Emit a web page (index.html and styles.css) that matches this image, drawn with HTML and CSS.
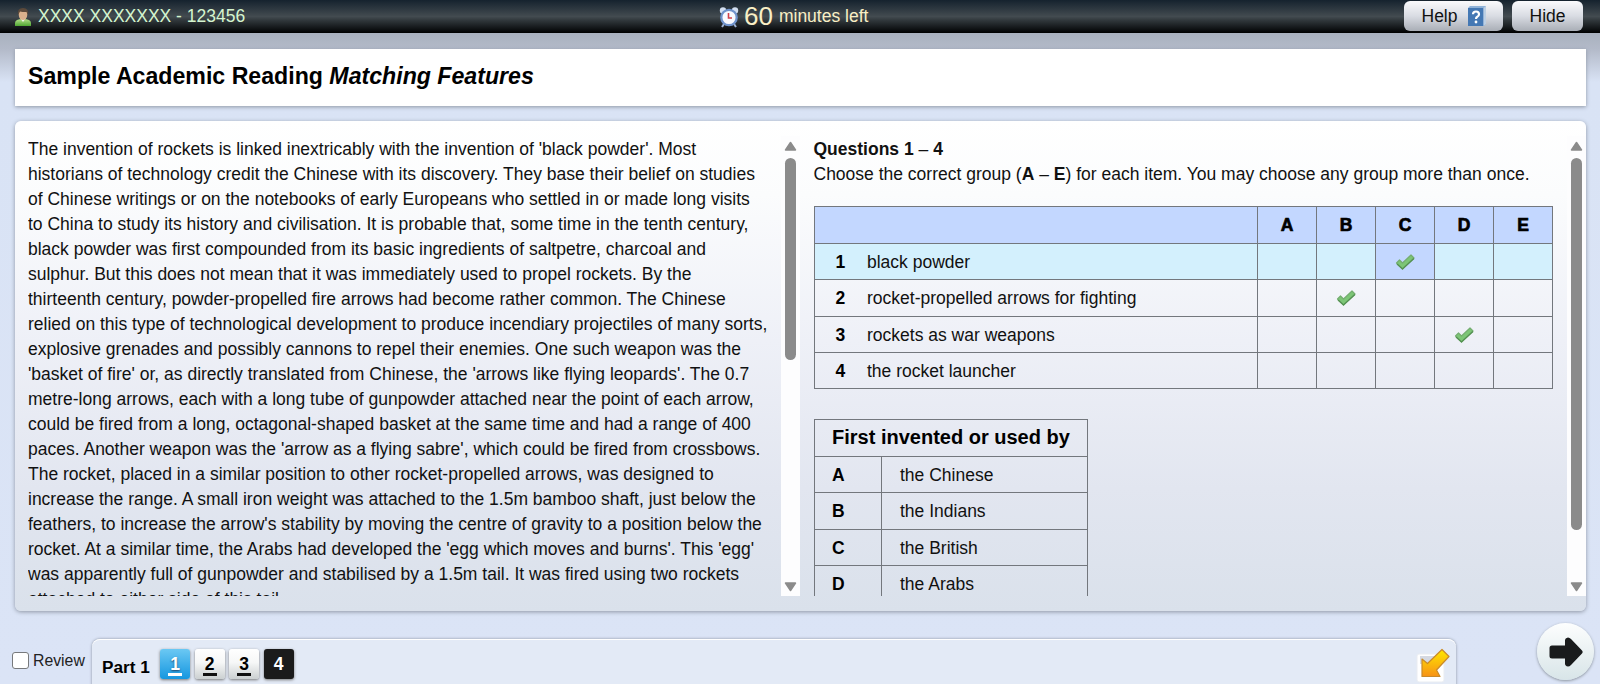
FILE: index.html
```html
<!DOCTYPE html>
<html lang="en">
<head>
<meta charset="utf-8">
<title>Sample Academic Reading</title>
<link rel="stylesheet" href="styles.css">
</head>
<body>
<header class="topbar">
  <div class="user">
    <svg width="18" height="20" viewBox="0 0 18 20"><defs><linearGradient id="gb" x1="0" y1="0" x2="0" y2="1"><stop offset="0" stop-color="#b4e08a"/><stop offset="1" stop-color="#4fa632"/></linearGradient></defs><path d="M1 19v-3q0-4 8-4t8 4v3z" fill="url(#gb)"/><path d="M6 11h6l-3 4z" fill="#f4f4ea"/><ellipse cx="9" cy="7.500" rx="4.300" ry="5.500" fill="#d9b08c"/><path d="M4 8Q3 1 9 1t5 7l-1.500-3Q8 5 6 4.500z" fill="#5c4a3b"/></svg>
    <span>XXXX XXXXXXX - 123456</span>
  </div>
  <div class="timer">
    <svg width="20" height="22" viewBox="0 0 20 22"><path d="M5 18l-2 3M15 18l2 3" stroke="#9fb4d6" stroke-width="2"/><circle cx="4" cy="4.500" r="3.200" fill="#d3dff1"/><circle cx="16" cy="4.500" r="3.200" fill="#d3dff1"/><circle cx="10" cy="11.500" r="7.700" fill="#f8faff" stroke="#6f93cc" stroke-width="2.300"/><path d="M9.500 7v5H13" stroke="#d0404a" stroke-width="1.600" fill="none"/></svg>
    <span class="minutes">60</span><span class="left">minutes left</span>
  </div>
  <div class="actions">
    <button class="pill help">Help
      <svg width="18" height="21" viewBox="0 0 18 21"><path d="M0 2l2-2h16v18l-2 2H0z" fill="#8fb2d8"/><path d="M0 2h15.500v18H0z" fill="#4478b4"/><path d="M15.500 2L18 0v18l-2.500 2z" fill="#bdd0e4"/><path d="M5 8.300Q5 5.500 8 5.500t3 2.800Q11 10 9.300 10.800 8 11.500 8 13" stroke="#fff" stroke-width="2.200" fill="none"/><circle cx="8" cy="16" r="1.400" fill="#fff"/></svg></button>
    <button class="pill hide">Hide</button>
  </div>
</header>
<section class="title"><h1>Sample Academic Reading <em>Matching Features</em></h1></section>
<main class="panel">
  <article class="passage">
    <p>The invention of rockets is linked inextricably with the invention of 'black powder'. Most<br>historians of technology credit the Chinese with its discovery. They base their belief on studies<br>of Chinese writings or on the notebooks of early Europeans who settled in or made long visits<br>to China to study its history and civilisation. It is probable that, some time in the tenth century,<br>black powder was first compounded from its basic ingredients of saltpetre, charcoal and<br>sulphur. But this does not mean that it was immediately used to propel rockets. By the<br>thirteenth century, powder-propelled fire arrows had become rather common. The Chinese<br>relied on this type of technological development to produce incendiary projectiles of many sorts,<br>explosive grenades and possibly cannons to repel their enemies. One such weapon was the<br>'basket of fire' or, as directly translated from Chinese, the 'arrows like flying leopards'. The 0.7<br>metre-long arrows, each with a long tube of gunpowder attached near the point of each arrow,<br>could be fired from a long, octagonal-shaped basket at the same time and had a range of 400<br>paces. Another weapon was the 'arrow as a flying sabre', which could be fired from crossbows.<br>The rocket, placed in a similar position to other rocket-propelled arrows, was designed to<br>increase the range. A small iron weight was attached to the 1.5m bamboo shaft, just below the<br>feathers, to increase the arrow's stability by moving the centre of gravity to a position below the<br>rocket. At a similar time, the Arabs had developed the 'egg which moves and burns'. This 'egg'<br>was apparently full of gunpowder and stabilised by a 1.5m tail. It was fired using two rockets<br>attached to either side of this tail.</p>
  </article>
  <div class="scroll">
    <svg width="13" height="10" viewBox="0 0 13 10"><path d="M6.500 1.500L11.500 9h-10z" class="tri"/></svg>
    <div class="track"><div class="thumb short"></div></div>
    <svg width="13" height="10" viewBox="0 0 13 10"><path d="M6.500 8.500L11.500 1h-10z" class="tri"/></svg>
  </div>
  <section class="questions">
    <p><b>Questions 1</b> – <b>4</b><br>Choose the correct group (<b>A</b> – <b>E</b>) for each item. You may choose any group more than once.</p>
    <div class="grid">
      <div class="row head"><span class="item"></span><b>A</b><b>B</b><b>C</b><b>D</b><b>E</b></div>
      <div class="row active"><span class="item"><b>1</b>black powder</span><i></i><i></i><i class="sel"><svg class="tick" viewBox="0 0 20 16"><use href="#tick"/></svg></i><i></i><i></i></div>
      <div class="row r2"><span class="item"><b>2</b>rocket-propelled arrows for fighting</span><i></i><i><svg class="tick" viewBox="0 0 20 16"><use href="#tick"/></svg></i><i></i><i></i><i></i></div>
      <div class="row"><span class="item"><b>3</b>rockets as war weapons</span><i></i><i></i><i></i><i><svg class="tick" viewBox="0 0 20 16"><use href="#tick"/></svg></i><i></i></div>
      <div class="row"><span class="item"><b>4</b>the rocket launcher</span><i></i><i></i><i></i><i></i><i></i></div>
    </div>
    <div class="key">
      <h2>First invented or used by</h2>
      <div class="krow"><b>A</b><span>the Chinese</span></div>
      <div class="krow k2"><b>B</b><span>the Indians</span></div>
      <div class="krow"><b>C</b><span>the British</span></div>
      <div class="krow"><b>D</b><span>the Arabs</span></div>
    </div>
  </section>
  <div class="scroll right">
    <svg width="13" height="10" viewBox="0 0 13 10"><path d="M6.500 1.500L11.500 9h-10z" class="tri"/></svg>
    <div class="track"><div class="thumb long"></div></div>
    <svg width="13" height="10" viewBox="0 0 13 10"><path d="M6.500 8.500L11.500 1h-10z" class="tri"/></svg>
  </div>
</main>
<footer class="footer">
  <label class="review"><span class="box"></span>Review</label>
  <nav class="nav">
    <b class="part">Part 1</b>
    <a class="q current"><u>1</u></a><a class="q"><u>2</u></a><a class="q"><u>3</u></a><a class="q done">4</a>
    <svg class="note" width="34" height="36" viewBox="0 0 34 36"><defs><linearGradient id="ga" x1="0" y1="0" x2="0" y2="1"><stop offset="0" stop-color="#ffe800"/><stop offset="1" stop-color="#f79216"/></linearGradient></defs><rect x="1" y="6" width="27" height="28" rx="2" fill="#fff" stroke="#e9ecf1"/><rect x="4" y="8" width="20" height="8" fill="#d5d9e2"/><path d="M26 1.500L33 8.500 20.500 22l3.500 6.500H6V11l5.500 4.500z" fill="url(#ga)" stroke="#c98a2a" stroke-width="1.200" stroke-linejoin="round"/></svg>
  </nav>
  <div class="next"><svg width="34" height="30" viewBox="0 0 34 30"><path d="M3 8.500h13V3.500Q16 1 19 .5q1.500 0 3 1.500l11 11.500q1.300 1.500 0 3L22 28q-1.500 1.500-3 1.500-3-.5-3-3v-5H3q-2.500 0-2.500-2.500v-8Q.5 8.500 3 8.500z" fill="#191b1c"/></svg></div>
</footer>
<svg class="defs"><defs><g id="tick"><path d="M1.500 9l3-3 3 3L16 1l3 3L7.500 15z" fill="#7cc676" stroke="#74ad70" stroke-width="1.200" stroke-linejoin="round"/><path d="M2 10l5.500 5L19 4.500" fill="none" stroke="#549152" stroke-width="1.200"/></g></defs></svg>
</body>
</html>
```
FILE: styles.css
```css
* { box-sizing: border-box; }
body { margin: 0; height: 684px; overflow: hidden; display: flex; flex-direction: column; font: 17.5px/25px "Liberation Sans", Arial, sans-serif; color: #111; background: linear-gradient(#a9b1be 33px, #b3bac9 49px, #d9e3f5 82px, #dbe4f6); }
p, h1, h2 { margin: 0; }
.topbar { height: 33px; flex: none; display: grid; grid-template-columns: 719px 1fr auto; background: linear-gradient(#15222e, #434b50 50%, #30373b 62%, #060809 95%, #000); padding-right: 17px; }
.user { display: flex; align-items: center; padding-left: 14px; gap: 6px; color: #d5f5cf; }
.timer { display: flex; align-items: center; color: #f9efc5; }
.minutes { font-size: 26px; margin: -2px 0 0 5px; line-height: 30px; }
.left { margin: 0 0 0 6px; }
.actions { display: flex; gap: 9px; padding-top: 1px; }
.pill { height: 30px; border: 0; border-radius: 6px; font: inherit; color: #111; background: linear-gradient(#fafafc, #d9dce3 50%, #a9aeb6); display: flex; align-items: center; justify-content: center; gap: 10px; padding: 0; }
.help { width: 99px; }
.hide { width: 71px; }
.title { margin: 16px 14px 0 15px; height: 57px; flex: none; background: #fff; padding: 14px 13px; box-shadow: 0 1px 4px #8d95a3; }
.title h1 { font-size: 23.15px; line-height: 26px; color: #000; }
.panel { margin: 15px 14px 0 15px; height: 490px; flex: none; display: flex; padding: 15px 0 15px 13px; border-radius: 6px; background: linear-gradient(#fff, #fbfcfd 15%, #eef0f7 45%, #e2e6f0 75%, #dae1eb); box-shadow: 0 1px 4px #8d95a3; overflow: hidden; }
.passage { width: 753px; flex: none; overflow: hidden; white-space: nowrap; padding-top: 1px; }
.scroll { width: 19px; flex: none; background: #fdfdfe; display: flex; flex-direction: column; align-items: center; padding: 5px 0 4px; }
.tri { fill: #8b8b8b; stroke: #8b8b8b; stroke-width: 1.5; stroke-linejoin: round; }
.track { flex: 1; padding-top: 7px; }
.thumb { width: 11px; border-radius: 6px; background: #8b8b8b; }
.short { height: 202px; }
.long { height: 372px; }
.questions { flex: 1; overflow: hidden; padding: 1px 0 0 13.5px; white-space: nowrap; }
.grid { width: 739px; margin-top: 19px; margin-left: .5px; border: 1px solid #73777d; border-bottom: 0; }
.row { display: grid; grid-template-columns: 1fr repeat(5, 59px); height: 36px; border-bottom: 1px solid #73777d; }
.row > * + * { border-left: 1px solid #73777d; display: flex; align-items: center; justify-content: center; }
.head { height: 37px; background: #c3d7ff; line-height: 35px; }
.head b { padding-top: 1px; font-weight: 900; color: #000; -webkit-text-stroke: .7px #000; }
.active { background: #d3f0fd; }
.r2 { height: 37px; }
.item { display: flex; align-items: center; padding-top: 1px; }
.item b { width: 52px; padding-right: 1.5px; text-align: center; color: #000; }
.sel { background: #c3d7ff; }
.tick { width: 20px; height: 16px; }
.key { width: 274px; margin-top: 30px; margin-left: .5px; border: 1px solid #73777d; }
.key h2 { font-size: 20px; line-height: 35px; height: 37px; padding-left: 17px; border-bottom: 1px solid #73777d; color: #000; }
.krow { display: grid; grid-template-columns: 67px 1fr; height: 36px; border-bottom: 1px solid #73777d; line-height: 36px; }
.krow b { padding-left: 17px; border-right: 1px solid #73777d; color: #000; }
.krow span { padding-left: 18px; }
.k2 { height: 37px; }
.footer { flex: 1; display: flex; padding-top: 28px; height: 73px; }
.review { width: 92px; flex: none; padding: 13px 0 0 12px; display: flex; gap: 4px; font-size: 15.8px; line-height: 18px; color: #222; }
.box { width: 17px; height: 17px; border: 1px solid #77797c; border-radius: 3px; background: #fff; }
.nav { width: 1364px; flex: none; height: 60px; border-radius: 8px; background: #e3eaf6; box-shadow: 0 0 3px #858d9b, inset 0 1px #fff; display: flex; padding: 10px 6px 0 10px; gap: 5px; }
.part { margin: 6px 6px 0 0; width: 47px; white-space: nowrap; color: #000; font-size: 17.2px; }
.q { width: 30px; height: 30px; border-radius: 3px; background: linear-gradient(#fff, #f6f7f7 45%, #cbd0d1); box-shadow: 0 1px 3px #777; font-weight: bold; line-height: 30px; text-align: center; color: #000; }
.q u { display: block; text-decoration: none; width: 14px; margin: 0 auto; height: 27px; border-bottom: 3px solid #111; }
.q + .q { margin-left: -.5px; }
.current { background: linear-gradient(#6bc8f3, #1697e0); color: #fff; text-shadow: 0 1px 2px #246; }
.current u { border-color: #fff; }
.done { background: #1b1b1b; color: #fff; }
.note { margin: -1px 0 0 auto; }
.next { width: 57px; height: 57px; flex: none; border-radius: 50%; margin: -16px 0 0 81px; background: linear-gradient(#fdfefe, #d8e5e8); box-shadow: 0 1px 3px #8a929b; display: flex; align-items: center; justify-content: center; }
.defs { width: 0; height: 0; position: absolute; }
```
